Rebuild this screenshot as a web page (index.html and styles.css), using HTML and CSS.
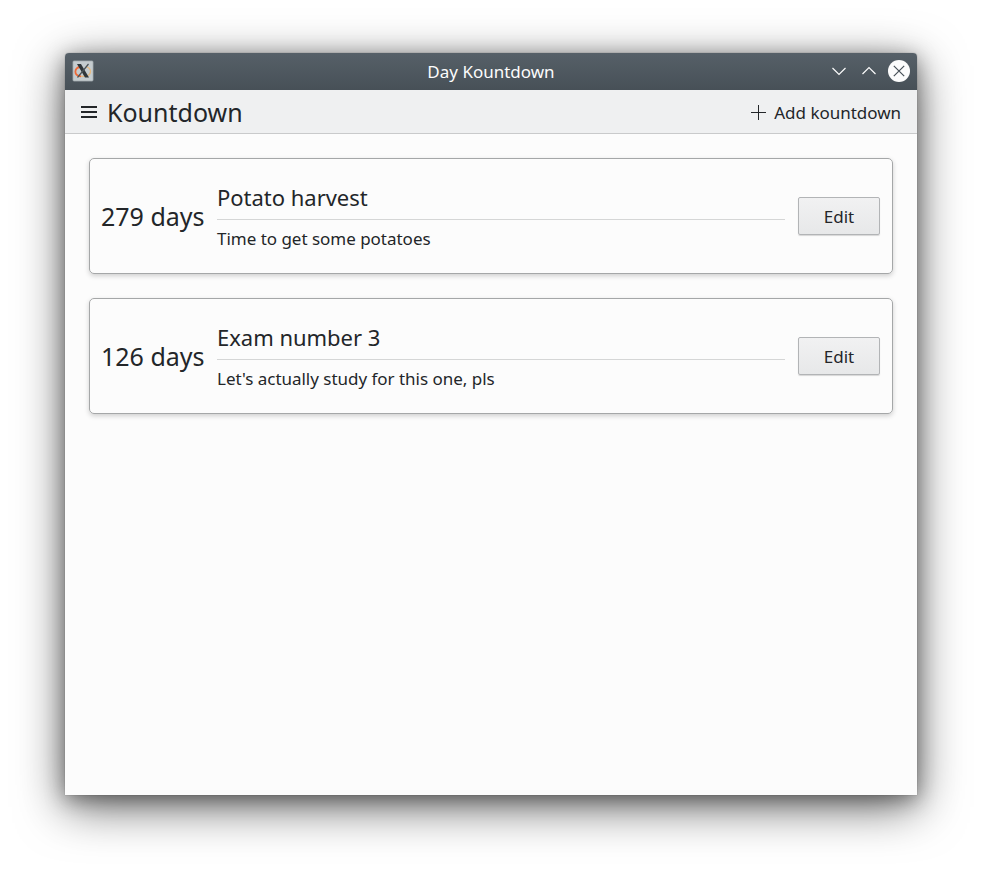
FILE: index.html
```html
<!DOCTYPE html>
<html lang="en">
<head>
<meta charset="utf-8">
<title>Day Kountdown</title>
<link rel="stylesheet" href="styles.css">
</head>
<body>
<div class="window">
  <header class="titlebar">
    <svg class="app-icon" width="22" height="22" viewBox="0 0 22 22">
      <rect x="1" y="1" width="20" height="20" rx="1" fill="#c5cccf" stroke="#a5adb1" stroke-width=".8"/>
      <path d="M9 6.500C1.500 8 1.500 15.500 9 16.300" fill="none" stroke="#ee6a38" stroke-width="1.800"/>
      <path d="M9 16.300C14 17 18.500 15 18.500 11.500C18.500 9 17 7.500 14.500 6.800" fill="none" stroke="#e6b980" stroke-width="1.300"/>
      <path d="M5 4h4l8 13.500h-4z" fill="#30363a"/>
      <path d="M16.500 4L5.500 17.500" stroke="#4b5256" stroke-width="1.200"/>
    </svg>
    <span class="title">Day Kountdown</span>
    <div class="controls">
      <svg width="22" height="22" viewBox="0 0 22 22"><path d="M4.500 8l6.500 6.500L17.500 8" fill="none" stroke="#fcfcfc" stroke-width="1.200"/></svg>
      <svg width="22" height="22" viewBox="0 0 22 22"><path d="M4.500 14l6.500-6.500L17.500 14" fill="none" stroke="#fcfcfc" stroke-width="1.200"/></svg>
      <svg width="22" height="22" viewBox="0 0 22 22"><circle cx="11" cy="11" r="11" fill="#fcfcfc"/><path d="M5.800 5.800l10.400 10.400M16.200 5.800L5.800 16.200" stroke="#475057" stroke-width="1.200"/></svg>
    </div>
  </header>
  <div class="toolbar">
    <svg class="menu" width="16" height="12" viewBox="0 0 16 12"><path d="M0 1h16M0 6h16M0 11h16" stroke="#232629" stroke-width="2"/></svg>
    <h1>Kountdown</h1>
    <div class="add">
      <svg width="15" height="15" viewBox="0 0 15 15"><path d="M0 7.500h15M7.500 0v15" stroke="#232629"/></svg>
      <span>Add kountdown</span>
    </div>
  </div>
  <main>
    <article class="card">
      <div class="days">279 days</div>
      <div class="info"><h2>Potato harvest</h2><p>Time to get some potatoes</p></div>
      <button>Edit</button>
    </article>
    <article class="card">
      <div class="days">126 days</div>
      <div class="info"><h2>Exam number 3</h2><p>Let's actually study for this one, pls</p></div>
      <button>Edit</button>
    </article>
  </main>
</div>
</body>
</html>
```
FILE: styles.css
```css
* { box-sizing: border-box; }
body { margin: 0; height: 872px; padding: 53px 65px; background: #fff; overflow: hidden; font-family: "Noto Sans", sans-serif; font-size: 17px; color: #232629; }
.window { width: 852px; height: 742px; background: #fcfcfc; border-radius: 4px 4px 0 0; box-shadow: 0 0 1px rgba(0,0,0,.5), 0 12px 48px rgba(0,0,0,.6), 0 4px 20px rgba(0,0,0,.36); }
.titlebar { height: 37px; display: grid; grid-template-columns: 100px 1fr 100px; align-items: center; padding: 0 7px; background: linear-gradient(#566068, #475057); border-radius: 4px 4px 0 0; color: #fcfcfc; }
.app-icon { margin-bottom: 1px; }
.title { text-align: center; line-height: 24px; padding-top: 1px; }
.controls { display: flex; gap: 8px; justify-content: flex-end; margin-bottom: 2px; }
.toolbar { height: 44px; display: flex; align-items: center; padding: 0 16px; background: #eff0f1; border-bottom: 1px solid #c9cacb; }
.toolbar h1 { margin: 0 0 0 10px; font-size: 25px; font-weight: 400; line-height: 34px; }
.add { margin-left: auto; display: flex; align-items: center; gap: 8px; line-height: 24px; }
.add span { margin-top: 2px; letter-spacing: -.02px; }
.add svg { margin-top: 1px; }
main { padding: 24px; display: flex; flex-direction: column; gap: 24px; }
.card { height: 116px; display: flex; align-items: center; padding: 0 12px 0 11px; border: 1px solid #a5a7a8; border-radius: 5px; box-shadow: 0 2px 5px rgba(0,0,0,.18); }
.days { width: 116px; font-size: 25px; line-height: 34px; white-space: nowrap; }
.info { flex: 1; margin-right: 13px; }
.info h2 { margin: 0; height: 38px; font-size: 22px; font-weight: 400; line-height: 30px; border-bottom: 1px solid #d5d6d6; letter-spacing: -.02px; }
.info p { margin: 7px 0 0; line-height: 24px; letter-spacing: -.02px; }
button { width: 82px; height: 38px; font: inherit; color: inherit; background: linear-gradient(#f1f1f2, #e7e8e9); border: 1px solid #b2b4b6; border-radius: 2px; box-shadow: 0 1px 1px rgba(0,0,0,.15); padding: 1px 0 0; }
```
